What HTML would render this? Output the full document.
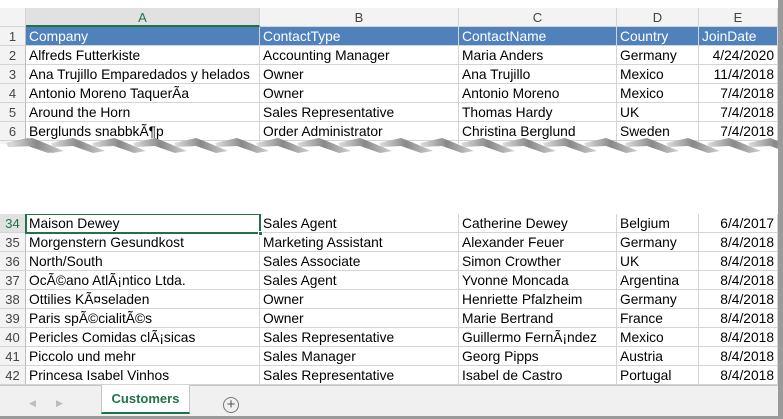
<!DOCTYPE html>
<html><head><meta charset="utf-8"><style>
*{margin:0;padding:0;box-sizing:border-box}
body{width:783px;height:419px;overflow:hidden;background:#fff;font-family:"Liberation Sans",Arial,sans-serif;position:relative}
.c{position:absolute;height:19px;line-height:19px;font-size:13.8px;color:#000;white-space:nowrap;overflow:hidden;border-right:1px solid #d4d4d4;border-bottom:1px solid #d4d4d4;padding-left:3px}
.r{text-align:right;padding-right:3px;padding-left:0}
.h{background:#f3f3f3;color:#444;text-align:center;padding:0;font-size:13px}
.rh{background:#f3f3f3;color:#444;text-align:center;padding:0;border-right:1px solid #bdbdbd;font-size:13px}
.b{background:#4f81bd;color:#fff}
</style></head><body>
<div id="g"></div>
<svg style="position:absolute;left:0;top:137px" width="779" height="80">
<defs><linearGradient id="gr" x1="0" y1="0" x2="1" y2="0"><stop offset="0" stop-color="#e0e0e0"/><stop offset="0.5" stop-color="#888"/><stop offset="1" stop-color="#d0d0d0"/></linearGradient></defs>
<rect x="0" y="7" width="779" height="70" fill="#fff"/>
<g fill="url(#gr)">
<path id="w" d="M6 6 L28 1 L36 4 L60 14 L48 16 L28 9 L8 10 Z"/>
</g>
</svg>
<div style="position:absolute;right:0;top:0;width:5px;height:419px;background:#9a9a9a"></div>
<div style="position:absolute;left:0;bottom:0;width:783px;height:3px;background:#9a9a9a"></div>
<div style="position:absolute;left:0;top:385px;width:778px;height:31px;background:#f0f0f0;border-top:1px solid #c6c6c6"></div>
<div style="position:absolute;left:29px;top:398px;font-size:9px;color:#bbb">◀</div>
<div style="position:absolute;left:56px;top:398px;font-size:9px;color:#bbb">▶</div>
<div style="position:absolute;left:101px;top:385px;width:89px;height:29px;background:#fff;border:1px solid #c6c6c6;border-top:none;border-bottom:2px solid #217346;text-align:center;line-height:27px;font-weight:bold;font-size:13px;color:#217346">Customers</div>
<div style="position:absolute;left:223px;top:397px;width:16px;height:16px;border:1px solid #777;border-radius:50%;text-align:center;line-height:13px;font-size:15px;color:#555">+</div>
<script>
var cols=[[0,26],[26,260],[260,459],[459,617],[617,699],[699,778]];
var rows=[
["1","Company","ContactType","ContactName","Country","JoinDate"],
["2","Alfreds Futterkiste","Accounting Manager","Maria Anders","Germany","4/24/2020"],
["3","Ana Trujillo Emparedados y helados","Owner","Ana Trujillo","Mexico","11/4/2018"],
["4","Antonio Moreno TaquerÃ­a","Owner","Antonio Moreno","Mexico","7/4/2018"],
["5","Around the Horn","Sales Representative","Thomas Hardy","UK","7/4/2018"],
["6","Berglunds snabbkÃ¶p","Order Administrator","Christina Berglund","Sweden","7/4/2018"],
["34","Maison Dewey","Sales Agent","Catherine Dewey","Belgium","6/4/2017"],
["35","Morgenstern Gesundkost","Marketing Assistant","Alexander Feuer","Germany","8/4/2018"],
["36","North/South","Sales Associate","Simon Crowther","UK","8/4/2018"],
["37","OcÃ©ano AtlÃ¡ntico Ltda.","Sales Agent","Yvonne Moncada","Argentina","8/4/2018"],
["38","Ottilies KÃ¤seladen","Owner","Henriette Pfalzheim","Germany","8/4/2018"],
["39","Paris spÃ©cialitÃ©s","Owner","Marie Bertrand","France","8/4/2018"],
["40","Pericles Comidas clÃ¡sicas","Sales Representative","Guillermo FernÃ¡ndez","Mexico","8/4/2018"],
["41","Piccolo und mehr","Sales Manager","Georg Pipps","Austria","8/4/2018"],
["42","Princesa Isabel Vinhos","Sales Representative","Isabel de Castro","Portugal","8/4/2018"]];
var h='';
var L=["","A","B","C","D","E"];
for(var j=0;j<6;j++){var x=cols[j][0],w=cols[j][1]-x;
h+='<div class="c h" style="left:'+x+'px;top:8px;width:'+w+'px;'+(j==1?'background:#e1e1e1;color:#217346;border-bottom:2px solid #217346':'')+'">'+L[j]+'</div>';}
for(var i=0;i<rows.length;i++){var y=i<6?27+19*i:214+19*(i-6);
for(var j=0;j<6;j++){var x=cols[j][0],w=cols[j][1]-x;var cls='c';
if(j==0)cls+=' rh';else if(i==0)cls+=' b';if(j==5&&i>0)cls+=' r';
var st='';if(j==0&&i==6)st='background:#e1e1e1;color:#217346;';
h+='<div class="'+cls+'" style="left:'+x+'px;top:'+y+'px;width:'+w+'px;'+st+'">'+rows[i][j]+'</div>';}}
for(var j=0;j<6;j++){var x=cols[j][0],w=cols[j][1]-x;
h+='<div class="c'+(j==0?' rh':'')+'" style="left:'+x+'px;top:141px;width:'+w+'px"></div>';
h+='<div class="c'+(j==0?' rh':'')+'" style="left:'+x+'px;top:385px;width:'+w+'px;height:5px"></div>';}
h+='<div style="position:absolute;left:25px;top:213px;width:236px;height:21px;border:2px solid #217346"></div>';
h+='<div style="position:absolute;left:258px;top:231px;width:5px;height:5px;background:#217346;border:1px solid #fff"></div>';
document.getElementById('g').innerHTML=h;
var s='';for(var k=0;k<19;k++){s+='<use href="#w" x="'+(k*41+4)+'"/>';}
document.querySelector('svg g').innerHTML+=s;
</script>
</body></html>
